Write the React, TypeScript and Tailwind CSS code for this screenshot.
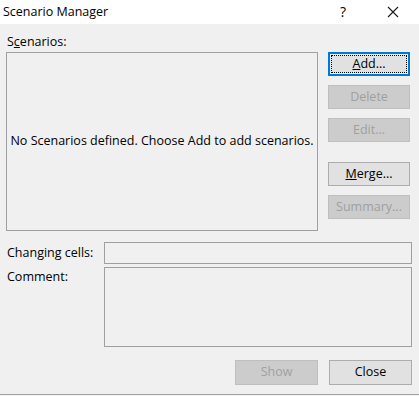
import React from "react";

const font = { fontFamily: '"Open Sans", "Noto Sans", sans-serif' };

const DialogButton: React.FC<{
  label: React.ReactNode;
  disabled?: boolean;
  focused?: boolean;
  className?: string;
}> = ({ label, disabled, focused, className = "" }) => {
  if (disabled) {
    return (
      <div
        className={`flex h-[24px] w-[82px] items-center justify-center border border-[#bfbfbf] bg-[#cccccc] text-[12.5px] text-[#a0a0a0] ${className}`}
      >
        {label}
      </div>
    );
  }
  if (focused) {
    return (
      <div
        className={`flex h-[24px] w-[82px] items-center justify-center border-2 border-[#0078d7] bg-[#e5f1fb] p-[1px] ${className}`}
      >
        <div className="flex h-full w-full items-center justify-center border border-dotted border-black bg-[#e1e1e1] text-[12.5px] text-black">
          {label}
        </div>
      </div>
    );
  }
  return (
    <div
      className={`flex h-[24px] w-[82px] items-center justify-center border border-[#adadad] bg-[#e1e1e1] text-[12.5px] text-black ${className}`}
    >
      {label}
    </div>
  );
};

export default function App() {
  return (
    <div className="flex h-[396px] w-[419px] flex-col bg-[#f0f0f0] text-black" style={font}>
      {/* title bar */}
      <div className="flex h-[24px] items-center bg-white pl-[3px]">
        <span className="text-[12.5px] leading-none">Scenario Manager</span>
        <span className="ml-auto mr-[41px] text-[14px] leading-none">?</span>
        <svg width="12" height="12" viewBox="0 0 12 12" className="mr-[20px]">
          <path d="M1 1L11 11M11 1L1 11" stroke="#1a1a1a" strokeWidth="1.1" />
        </svg>
      </div>

      <div className="flex flex-col px-[6px] pt-[10px]">
        <div className="text-[12.5px] leading-[16px] pl-[1px]">
          S<span className="underline">c</span>enarios:
        </div>
        <div className="mt-[2px] flex gap-[10px]">
          <div className="flex h-[179px] w-[312px] items-center justify-center border border-[#a0a0a0] text-[12.5px]">
            No Scenarios defined. Choose Add to add scenarios.
          </div>
          <div className="flex flex-col">
            <DialogButton
              focused
              label={
                <span>
                  <span className="underline">A</span>dd...
                </span>
              }
            />
            <DialogButton disabled label="Delete" className="mt-[9px]" />
            <DialogButton disabled label="Edit..." className="mt-[9px]" />
            <DialogButton
              label={
                <span>
                  <span className="underline">M</span>erge...
                </span>
              }
              className="mt-[20px]"
            />
            <DialogButton disabled label="Summary..." className="mt-[9px]" />
          </div>
        </div>

        <div className="mt-[11px] flex items-center">
          <div className="w-[98px] pl-[1px] text-[12.5px]">Changing cells:</div>
          <div className="h-[22px] w-[308px] border border-[#a0a0a0] bg-[#f0f0f0]" />
        </div>
        <div className="mt-[3px] flex">
          <div className="w-[98px] pl-[1px] pt-[1px] text-[12.5px]">Comment:</div>
          <div className="h-[80px] w-[308px] border border-[#a0a0a0] bg-[#f0f0f0]" />
        </div>

        <div className="mt-[13px] flex justify-end gap-[11px] pr-[1px]">
          <DialogButton disabled label="Show" className="h-[25px] w-[83px]" />
          <DialogButton label="Close" className="h-[25px] w-[83px]" />
        </div>
      </div>

      <div className="mt-auto h-[2px] border-t border-[#a0a0a0] bg-[#f5f5f5]" />
    </div>
  );
}
